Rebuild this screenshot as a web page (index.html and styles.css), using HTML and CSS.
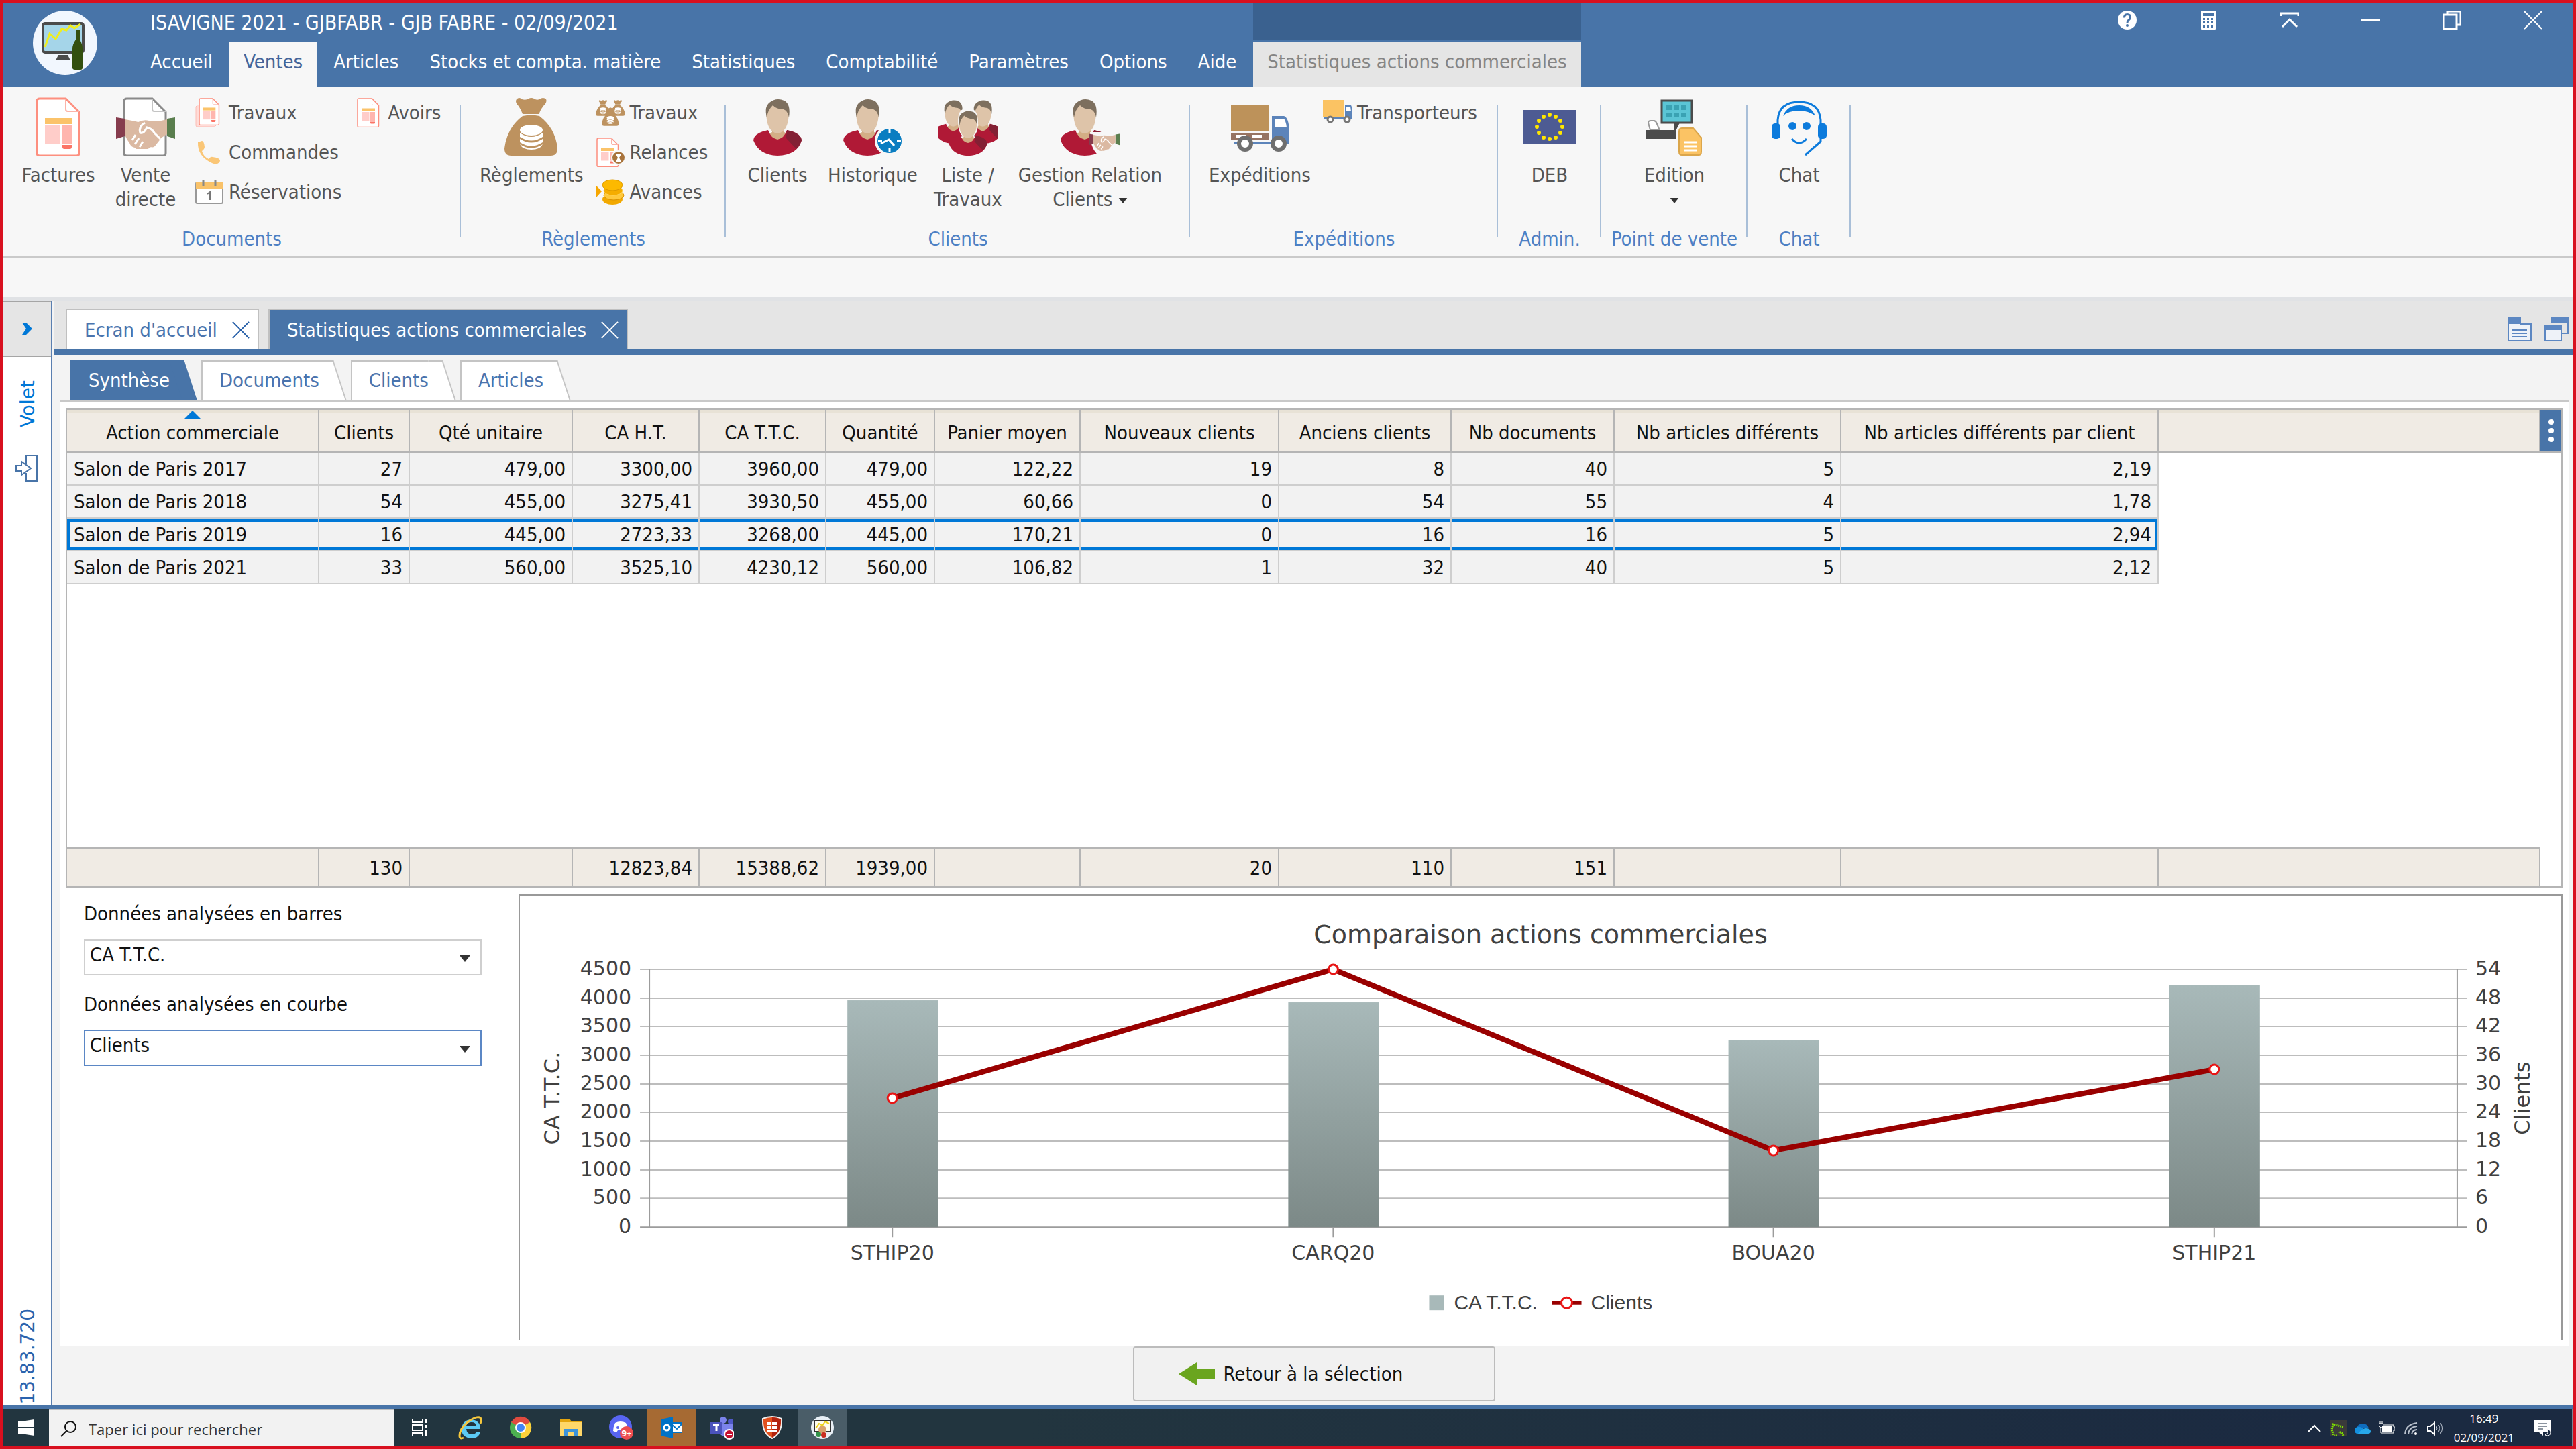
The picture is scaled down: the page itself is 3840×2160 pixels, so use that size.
FILE: index.html
```
<!DOCTYPE html>
<html lang="fr">
<head>
    <meta charset="UTF-8">
    <meta name="viewport" content="width=device-width, initial-scale=1.0">
    <title>ISAVIGNE 2021 - Statistiques actions commerciales</title>
    <link rel="stylesheet" href="styles.css">
</head>
<body>
    <!-- Shared icon shapes -->
    <svg class="defs" aria-hidden="true">
        <symbol id="i-doc" viewBox="0 0 88 88">
            <path d="M16 2h39l20 20v61q0 4-4 4H16q-4 0-4-4V6q0-4 4-4z" fill="#fff" stroke="#fd8f7f" stroke-width="3"/>
            <path d="M55 2v16q0 3 3 3h17" fill="none" stroke="#fbb3a8" stroke-width="2"/>
            <path d="M24 31h40v9H24z" fill="#fbc36a"/>
            <path d="M24 42h23v27H24z" fill="#ffcdc9"/>
            <path d="M50 42h14v27H50z" fill="#ffb5ae"/>
            <path d="M50 71h14v3q0 3-3 3h-8q-3 0-3-3z" fill="#fb7466"/>
        </symbol>
        <symbol id="i-hands" viewBox="0 0 88 44">
            <path d="M0 0l13 2v26L0 32z" fill="#863c4d"/>
            <path d="M88 0L76 2v26l12 4z" fill="#5a7e4e"/>
            <path d="M13 3q12 2 20 4 8-4 16-2 14 2 27-2v22l-8 5-8 10q-4 6-8 4-8 6-14 4-6 2-10-3-6-1-8-7-4-5-7-12z" fill="#dbb9a2"/>
            <path d="M43 8q-10 6-7 15 5 2 10-8 8 2 11 8l9 9M35 44l5-8M28 40l6-9M24 34l5-8" fill="none" stroke="#fff" stroke-width="3"/>
        </symbol>
        <symbol id="i-person" viewBox="0 0 88 88">
            <path d="M36 42h18v10l6 3-16 14-14-14 6-3z" fill="#d3ae86"/>
            <path d="M8 64q1-9 14-13l8-2q4 12 14 14 10-2 14-14l8 2q13 4 14 13-6 22-36 23Q16 86 8 64z" fill="#b01936"/>
            <path d="M58 49l8 2q13 4 14 13-2 7-8 13L56 60q2-5 2-11z" fill="#832034"/>
            <path d="M27 20q0-14 17-14t17 14q0 32-17 34-17-2-17-34z" fill="#dec4a9"/>
            <path d="M28 30q-4-16 4-22Q42 0 54 5q10 5 7 25-2-10-8-12-10 0-16-6-7 6-9 18z" fill="#7d6f5e"/>
        </symbol>
        <symbol id="i-bag" viewBox="0 0 88 88">
            <path d="M22 3q4-4 8 0 6 2 10-1 4-2 8 0 4 3 8 1 6-4 10 0 2 4-4 10-6 8-6 12l-25 0q-2-6-6-12-6-6-3-10z" fill="#bd925f"/>
            <path d="M31 28q13-3 25 0 24 18 27 48 0 11-10 11H14Q4 87 4 76 8 45 31 28z" fill="#bd925f"/>
            <ellipse cx="44" cy="49" rx="17" ry="8" fill="#fff"/>
            <path d="M27 53q17 12 34 0v6q-17 11-34 0zM27 62q17 11 34 0v5q-17 11-34 0zM27 70q17 11 34 0-4 8-17 8t-17-8z" fill="#fff"/>
        </symbol>
        <symbol id="i-coins" viewBox="0 0 44 44">
            <path d="M0 12l9 9-9 10z" fill="#f7a700"/>
            <ellipse cx="25" cy="33" rx="15" ry="8" fill="#f2a900"/>
            <ellipse cx="27" cy="27" rx="15" ry="7" fill="#ffc93c" stroke="#d99100"/>
            <ellipse cx="26" cy="20" rx="14" ry="7" fill="#f5ad00" stroke="#ffd562"/>
            <ellipse cx="25" cy="12" rx="15" ry="8" fill="#fdb900" stroke="#dd9a00"/>
        </symbol>
        <symbol id="i-close" viewBox="0 0 28 28">
            <path d="M1 1l26 26M27 1L1 27" fill="none" stroke="currentColor" stroke-width="2"/>
        </symbol>
        <symbol id="i-caret" viewBox="0 0 18 10">
            <path d="M1 0h16L9 10z" fill="#333"/>
        </symbol>
    </svg>

    <div class="app">
        <header class="header">
            <div class="logo">
                <svg viewBox="0 0 96 96" aria-hidden="true">
                    <circle cx="48" cy="48" r="48" fill="#f2f7fe"/>
                    <rect x="15" y="19" width="60" height="43" rx="3" fill="#a5d5e9" stroke="#4b4b4b" stroke-width="4"/>
                    <path d="M18 54l7-20 9 8 9-15 7 2 6-7 6 4 9-6" fill="none" stroke="#f0ee1c" stroke-width="3"/>
                    <path d="M38 66h14l4 8H34z" fill="#4b4b4b"/>
                    <path d="M64 29h6v14q4 7 4 14v28q0 3-3 3h-8q-4 0-4-3V57q0-7 5-14z" fill="#33500f"/>
                </svg>
            </div>
            <div class="header-main">
                <div class="title-row">
                    <h1 class="app-title">ISAVIGNE 2021 - GJBFABR - GJB FABRE - 02/09/2021</h1>
                    <div class="window-buttons">
                        <button type="button" aria-label="Aide">
                            <svg viewBox="0 0 28 28"><circle cx="14" cy="14" r="14" fill="#fff"/><path d="M9.500 10.500q0-5 4.500-5t4.500 4.500q0 2-2.500 4-2 1.500-2 4" fill="none" stroke="#4874a8" stroke-width="3"/><circle cx="14" cy="22" r="2" fill="#4874a8"/></svg>
                        </button>
                        <button type="button" aria-label="Calculatrice">
                            <svg viewBox="0 0 28 28"><rect x="3" y="0" width="22" height="28" rx="1" fill="#fff"/><path d="M6 3h16v5H6zM6 11h3v3H6zM12 11h3v3h-3zM18 11h3v3h-3zM6 16h3v3H6zM12 16h3v3h-3zM18 16h3v3h-3zM6 22h3v3H6zM12 22h3v3h-3zM18 22h3v3h-3z" fill="#4874a8"/></svg>
                        </button>
                        <button type="button" aria-label="Réduire le ruban">
                            <svg viewBox="0 0 28 28"><path d="M1 8V4h26v4M3 24l11-11 11 11" fill="none" stroke="#fff" stroke-width="3"/></svg>
                        </button>
                        <button type="button" aria-label="Réduire">
                            <svg viewBox="0 0 28 28"><path d="M0 14h28" stroke="#fff" stroke-width="3"/></svg>
                        </button>
                        <button type="button" aria-label="Restaurer">
                            <svg viewBox="0 0 28 28"><path d="M1 6h20v21H1zM7 6V1h20v20h-6" fill="none" stroke="#fff" stroke-width="3"/></svg>
                        </button>
                        <button type="button" aria-label="Fermer">
                            <svg class="light"><use href="#i-close"/></svg>
                        </button>
                    </div>
                </div>
                <nav class="menu">
                    <a href="#">Accueil</a>
                    <a href="#" class="active">Ventes</a>
                    <a href="#">Articles</a>
                    <a href="#">Stocks et compta. matière</a>
                    <a href="#">Statistiques</a>
                    <a href="#">Comptabilité</a>
                    <a href="#">Paramètres</a>
                    <a href="#">Options</a>
                    <a href="#">Aide</a>
                    <a href="#" class="context">Statistiques actions commerciales</a>
                </nav>
            </div>
        </header>

        <div class="ribbon">
            <section class="group group-documents">
                <div class="group-items">
                    <button type="button" class="big"><svg><use href="#i-doc"/></svg><span>Factures</span></button>
                    <button type="button" class="big">
                        <svg viewBox="0 0 88 88">
                            <path d="M16 2h38l20 20v61q0 4-4 4H16q-4 0-4-4V6q0-4 4-4z" fill="#fff" stroke="#8a8a8a" stroke-width="3"/>
                            <path d="M54 2v16q0 3 3 3h17" fill="none" stroke="#c4c4c4" stroke-width="2"/>
                            <use href="#i-hands" x="0" y="27" width="88" height="50"/>
                        </svg>
                        <span>Vente<br>directe</span>
                    </button>
                    <div class="stack">
                        <button type="button" class="small">
                            <svg viewBox="0 0 44 44"><path d="M5 10l-3 3v28q0 2 2 2h26l4-4" fill="#ffdcd8" stroke="#fcbdb4"/><use href="#i-doc" x="0" y="0" width="44" height="41"/></svg>Travaux
                        </button>
                        <button type="button" class="small">
                            <svg viewBox="0 0 44 44"><path d="M5 7l6-2q3 0 4 9 0 3-4 6 2 8 10 12 3-4 6-3 10 1 11 5 0 3-4 5-4 1-8-1Q4 28 5 7z" fill="#fac676"/></svg>Commandes
                        </button>
                        <button type="button" class="small">
                            <svg viewBox="0 0 44 44"><rect x="2" y="8" width="40" height="31" rx="2" fill="#fff" stroke="#999" stroke-width="2"/><path d="M2 7h40v11H2z" fill="#f9c269"/><path d="M13 4v9M31 4v9" stroke="#888" stroke-width="3"/><path d="M19 25l4-3v12" fill="none" stroke="#777" stroke-width="2"/></svg>Réservations
                        </button>
                    </div>
                    <div class="stack stack-avoirs">
                        <button type="button" class="small"><svg><use href="#i-doc"/></svg>Avoirs</button>
                    </div>
                </div>
                <h2>Documents</h2>
            </section>

            <section class="group group-reglements">
                <div class="group-items">
                    <button type="button" class="big"><svg><use href="#i-bag"/></svg><span>Règlements</span></button>
                    <div class="stack">
                        <button type="button" class="small">
                            <svg viewBox="0 0 44 44"><use href="#i-bag" x="-1" y="0" width="24" height="30"/><use href="#i-bag" x="21" y="0" width="24" height="30"/><use href="#i-bag" x="8" y="12" width="28" height="32"/></svg>Travaux
                        </button>
                        <button type="button" class="small">
                            <svg viewBox="0 0 44 44"><use href="#i-doc" x="-4" y="0" width="44" height="44"/><circle cx="34" cy="30" r="10" fill="#a9743c" stroke="#f7f7f7" stroke-width="2"/><path d="M30 25h8l-3 5 3 6h-8l3-6z" fill="#fff"/></svg>Relances
                        </button>
                        <button type="button" class="small"><svg><use href="#i-coins"/></svg>Avances</button>
                    </div>
                </div>
                <h2>Règlements</h2>
            </section>

            <section class="group group-clients">
                <div class="group-items">
                    <button type="button" class="big"><svg><use href="#i-person"/></svg><span>Clients</span></button>
                    <button type="button" class="big">
                        <svg viewBox="0 0 88 88"><use href="#i-person" x="-8" y="0" width="88" height="88"/><circle cx="69" cy="65" r="20" fill="#0a7dc1" stroke="#f7f7f7" stroke-width="4"/><path d="M69 48v6M69 76v6M52 65h6M80 65h6M56 69l12-6 8 9" fill="none" stroke="#fff" stroke-width="3"/></svg>
                        <span>Historique</span>
                    </button>
                    <button type="button" class="big">
                        <svg viewBox="0 0 88 88"><use href="#i-person" x="-12" y="2" width="68" height="68"/><use href="#i-person" x="32" y="2" width="68" height="68"/><path d="M44 16q-16 0-15 22 1 16 7 20-18 4-22 12 6 18 30 18t30-18q-4-10-22-12 7-4 7-20 0-22-15-22z" fill="#f7f7f7"/><use href="#i-person" x="9" y="18" width="70" height="70"/></svg>
                        <span>Liste /<br>Travaux</span>
                    </button>
                    <button type="button" class="big">
                        <svg viewBox="0 0 88 88"><use href="#i-person" x="-8" y="0" width="88" height="88"/><path d="M44 52h46v32H54q-10-10-10-32z" fill="#f7f7f7"/><use href="#i-hands" x="42" y="51" width="46" height="30"/></svg>
                        <span>Gestion Relation<br>Clients <svg class="caret"><use href="#i-caret"/></svg></span>
                    </button>
                </div>
                <h2>Clients</h2>
            </section>

            <section class="group group-expeditions">
                <div class="group-items">
                    <button type="button" class="big">
                        <svg viewBox="0 0 88 88"><path d="M1 12h56v38H1z" fill="#bd925a"/><path d="M1 53h57v11H1z" fill="#977462"/><path d="M9 58h14M33 58h14" stroke="#fff" stroke-width="4"/><path d="M62 28h18q7 2 8 22v20H5V66h57z" fill="#5c84ba"/><path d="M66 32h14q3 4 4 13H66z" fill="#fff"/><circle cx="22" cy="69" r="9" fill="#fff" stroke="#6f6f6f" stroke-width="6"/><circle cx="72" cy="69" r="9" fill="#fff" stroke="#6f6f6f" stroke-width="6"/></svg>
                        <span>Expéditions</span>
                    </button>
                    <div class="stack">
                        <button type="button" class="small">
                            <svg viewBox="0 0 44 44"><path d="M0 3h31v25H0z" fill="#fbc363"/><path d="M33 10h8q3 2 3 12v10H2v-3h31z" fill="#5c84ba"/><path d="M35 13h6l1 7h-7z" fill="#fff"/><circle cx="11" cy="32" r="4" fill="#fff" stroke="#777" stroke-width="3"/><circle cx="36" cy="32" r="4" fill="#fff" stroke="#777" stroke-width="3"/></svg>Transporteurs
                        </button>
                    </div>
                </div>
                <h2>Expéditions</h2>
            </section>

            <section class="group group-admin">
                <div class="group-items">
                    <button type="button" class="big">
                        <svg viewBox="0 0 88 88"><path d="M5 19h78v50H5z" fill="#4d5b93"/><g fill="#ffe600"><circle cx="44" cy="26" r="3"/><circle cx="53" cy="29" r="3"/><circle cx="60" cy="35" r="3"/><circle cx="63" cy="44" r="3"/><circle cx="60" cy="53" r="3"/><circle cx="53" cy="60" r="3"/><circle cx="44" cy="62" r="3"/><circle cx="35" cy="60" r="3"/><circle cx="28" cy="53" r="3"/><circle cx="25" cy="44" r="3"/><circle cx="28" cy="35" r="3"/><circle cx="35" cy="29" r="3"/></g></svg>
                        <span>DEB</span>
                    </button>
                </div>
                <h2>Admin.</h2>
            </section>

            <section class="group group-pdv">
                <div class="group-items">
                    <button type="button" class="big">
                        <svg viewBox="0 0 88 88"><rect x="25" y="5" width="45" height="33" fill="#5bc5d5" stroke="#4b4b4b" stroke-width="3"/><path d="M32 12h8v7h-8zM43 12h8v7h-8zM54 12h8v7h-8zM32 23h8v7h-8zM43 23h8v7h-8zM54 23h8v7h-8z" fill="#3aa2b3"/><path d="M8 49L5 38q0-3 4-3h5q3 1 4 5l4 9z" fill="#fff" stroke="#999" stroke-width="2"/><path d="M44 38h8l-6 12v12H1V49h43z" fill="#4b4b4b"/><path d="M55 46h17l12 14v21q0 5-4 5H55q-4 0-4-5V51q0-5 4-5z" fill="#fbc364" stroke="#dba64b" stroke-width="2"/><path d="M58 67h20M58 73h20M58 79h20" stroke="#fff" stroke-width="3"/></svg>
                        <span>Edition<br><svg class="caret"><use href="#i-caret"/></svg></span>
                    </button>
                </div>
                <h2>Point de vente</h2>
            </section>

            <section class="group group-chat">
                <div class="group-items">
                    <button type="button" class="big">
                        <svg viewBox="0 0 88 88"><path d="M12 40V34Q14 7 44 7t32 27v32L53 86" fill="none" stroke="#0d7bdc" stroke-width="3"/><path d="M20 28q6-16 24-16t24 16q-10-8-24-8-16 0-24 8z" fill="#0d7bdc"/><rect x="3" y="39" width="13" height="23" rx="5" fill="#0d7bdc"/><rect x="72" y="39" width="13" height="23" rx="5" fill="#0d7bdc"/><circle cx="34" cy="43" r="6" fill="#0d7bdc"/><circle cx="55" cy="43" r="6" fill="#0d7bdc"/><path d="M33 62q11 12 22 0" fill="none" stroke="#0d7bdc" stroke-width="3"/></svg>
                        <span>Chat</span>
                    </button>
                </div>
                <h2>Chat</h2>
            </section>
        </div>
        <div class="ribbon-gap"></div>

        <div class="workspace">
            <aside class="sidebar">
                <button type="button" class="sidebar-toggle" aria-label="Ouvrir le volet">
                    <svg viewBox="0 0 18 22"><path d="M2 2h6l9 9-9 9H2l6-9z" fill="#0078d7"/></svg>
                </button>
                <span class="sidebar-label">Volet</span>
                <svg class="sidebar-pin" viewBox="0 0 36 42"><path d="M17 14V2h16v38H17V28M2 17h8v-6l14 10-14 10v-6H2z" fill="none" stroke="#4874a8" stroke-width="2"/></svg>
                <span class="sidebar-version">13.83.720</span>
            </aside>

            <main class="content">
                <div class="doc-tabs">
                    <div class="doc-tab">
                        <a href="#">Ecran d'accueil</a>
                        <button type="button" aria-label="Fermer l'onglet"><svg><use href="#i-close"/></svg></button>
                    </div>
                    <div class="doc-tab active">
                        <a href="#">Statistiques actions commerciales</a>
                        <button type="button" aria-label="Fermer l'onglet"><svg><use href="#i-close"/></svg></button>
                    </div>
                    <div class="doc-tools">
                        <button type="button" aria-label="Liste des fenêtres">
                            <svg viewBox="0 0 36 36"><path d="M1 1h18v9h16v25H1z" fill="#eef2f8" stroke="#5c87c2" stroke-width="2"/><path d="M1 1h18v9H1z" fill="#5c87c2"/><path d="M7 19h22M7 24h22M7 29h22" stroke="#5c87c2" stroke-width="2"/></svg>
                        </button>
                        <button type="button" aria-label="Cascade">
                            <svg viewBox="0 0 36 36"><path d="M11 1h24v23H24" fill="none" stroke="#5c87c2" stroke-width="2"/><path d="M10 0h26v8H10z" fill="#5c87c2"/><path d="M1 12h24v23H1z" fill="#eef2f8" stroke="#5c87c2" stroke-width="2"/><path d="M0 11h26v8H0z" fill="#5c87c2"/></svg>
                        </button>
                    </div>
                </div>

                <div class="subtabs">
                    <button type="button" class="subtab active">Synthèse</button>
                    <button type="button" class="subtab">Documents</button>
                    <button type="button" class="subtab">Clients</button>
                    <button type="button" class="subtab">Articles</button>
                </div>

                <div class="panel">
                    <div class="grid-box">
                        <table class="grid">
                            <colgroup>
                                <col class="c-action"><col class="c-clients"><col class="c-qte"><col class="c-ca"><col class="c-ca"><col class="c-quantite"><col class="c-panier"><col class="c-nouveaux"><col class="c-anciens"><col class="c-docs"><col class="c-articles"><col class="c-parclient"><col><col class="c-menu">
                            </colgroup>
                            <thead>
                                <tr>
                                    <th class="sorted">Action commerciale<svg class="sort" viewBox="0 0 26 13"><path d="M0 13L13 0l13 13z" fill="#0078d7"/></svg></th>
                                    <th>Clients</th>
                                    <th>Qté unitaire</th>
                                    <th>CA H.T.</th>
                                    <th>CA T.T.C.</th>
                                    <th>Quantité</th>
                                    <th>Panier moyen</th>
                                    <th>Nouveaux clients</th>
                                    <th>Anciens clients</th>
                                    <th>Nb documents</th>
                                    <th>Nb articles différents</th>
                                    <th>Nb articles différents par client</th>
                                    <th></th>
                                    <th class="menu-cell"><button type="button" aria-label="Colonnes"><svg viewBox="0 0 8 36"><circle cx="4" cy="5" r="4" fill="#fff"/><circle cx="4" cy="18" r="4" fill="#fff"/><circle cx="4" cy="31" r="4" fill="#fff"/></svg></button></th>
                                </tr>
                            </thead>
                            <tbody>
                                <tr><td>Salon de Paris 2017</td><td>27</td><td>479,00</td><td>3300,00</td><td>3960,00</td><td>479,00</td><td>122,22</td><td>19</td><td>8</td><td>40</td><td>5</td><td>2,19</td></tr>
                                <tr><td>Salon de Paris 2018</td><td>54</td><td>455,00</td><td>3275,41</td><td>3930,50</td><td>455,00</td><td>60,66</td><td>0</td><td>54</td><td>55</td><td>4</td><td>1,78</td></tr>
                                <tr class="selected"><td>Salon de Paris 2019</td><td>16</td><td>445,00</td><td>2723,33</td><td>3268,00</td><td>445,00</td><td>170,21</td><td>0</td><td>16</td><td>16</td><td>5</td><td>2,94</td></tr>
                                <tr><td>Salon de Paris 2021</td><td>33</td><td>560,00</td><td>3525,10</td><td>4230,12</td><td>560,00</td><td>106,82</td><td>1</td><td>32</td><td>40</td><td>5</td><td>2,12</td></tr>
                                <tr class="filler"><td colspan="14"></td></tr>
                            </tbody>
                            <tfoot>
                                <tr><td></td><td>130</td><td></td><td>12823,84</td><td>15388,62</td><td>1939,00</td><td></td><td>20</td><td>110</td><td>151</td><td></td><td></td><td></td><td class="corner"></td></tr>
                            </tfoot>
                        </table>
                    </div>

                    <div class="analysis">
                        <form class="analysis-form">
                            <label for="bars">Données analysées en barres</label>
                            <div class="select">
                                <select id="bars"><option>CA T.T.C.</option></select>
                                <svg class="caret"><use href="#i-caret"/></svg>
                            </div>
                            <label for="curve">Données analysées en courbe</label>
                            <div class="select focus">
                                <select id="curve"><option>Clients</option></select>
                                <svg class="caret"><use href="#i-caret"/></svg>
                            </div>
                        </form>

                        <div class="chart">
                            <svg viewBox="0 0 3042 662" role="img" aria-label="Comparaison actions commerciales">
                                <defs>
                                    <linearGradient id="bar" x1="0" y1="0" x2="0" y2="1">
                                        <stop offset="0" stop-color="#a8b9b9"/>
                                        <stop offset="1" stop-color="#7c8987"/>
                                    </linearGradient>
                                </defs>
                                <text class="chart-title" x="1521" y="70">Comparaison actions commerciales</text>
                                <path class="lines" d="M179 109H2902M179 152H2902M179 194H2902M179 237H2902M179 280H2902M179 322H2902M179 365H2902M179 408H2902M179 450H2902"/>
                                <path class="axes" d="M179 493H2902M193 109V493M2887 109V493M555 493v15M1212 493v15M1868 493v15M2525 493v15"/>
                                <g fill="url(#bar)">
                                    <rect x="488" y="155" width="135" height="338"/>
                                    <rect x="1145" y="158" width="135" height="335"/>
                                    <rect x="1801" y="214" width="135" height="279"/>
                                    <rect x="2458" y="132" width="135" height="361"/>
                                </g>
                                <path class="curve" d="M555 301L1212 109L1868 379L2525 258"/>
                                <g class="points">
                                    <circle cx="555" cy="301" r="7"/>
                                    <circle cx="1212" cy="109" r="7"/>
                                    <circle cx="1868" cy="379" r="7"/>
                                    <circle cx="2525" cy="258" r="7"/>
                                </g>
                                <g class="ticks-left">
                                    <text x="166" y="118">4500</text>
                                    <text x="166" y="161">4000</text>
                                    <text x="166" y="203">3500</text>
                                    <text x="166" y="246">3000</text>
                                    <text x="166" y="289">2500</text>
                                    <text x="166" y="331">2000</text>
                                    <text x="166" y="374">1500</text>
                                    <text x="166" y="417">1000</text>
                                    <text x="166" y="459">500</text>
                                    <text x="166" y="502">0</text>
                                </g>
                                <g class="ticks-right">
                                    <text x="2914" y="118">54</text>
                                    <text x="2914" y="161">48</text>
                                    <text x="2914" y="203">42</text>
                                    <text x="2914" y="246">36</text>
                                    <text x="2914" y="289">30</text>
                                    <text x="2914" y="331">24</text>
                                    <text x="2914" y="374">18</text>
                                    <text x="2914" y="417">12</text>
                                    <text x="2914" y="459">6</text>
                                    <text x="2914" y="502">0</text>
                                </g>
                                <g class="ticks-bottom">
                                    <text x="555" y="542">STHIP20</text>
                                    <text x="1212" y="542">CARQ20</text>
                                    <text x="1868" y="542">BOUA20</text>
                                    <text x="2525" y="542">STHIP21</text>
                                </g>
                                <text class="axis-title" transform="translate(59 301) rotate(-90)">CA T.T.C.</text>
                                <text class="axis-title" transform="translate(2995 301) rotate(-90)">Clients</text>
                                <g class="legend">
                                    <path d="M1355 595h22v22h-22z" fill="#a8b9b9"/>
                                    <text x="1392" y="616">CA T.T.C.</text>
                                    <path class="legend-line" d="M1538 606h44"/>
                                    <circle cx="1560" cy="606" r="8"/>
                                    <text x="1596" y="616">Clients</text>
                                </g>
                            </svg>
                        </div>
                    </div>
                </div>

                <div class="actions">
                    <button type="button" class="back-btn">
                        <svg viewBox="0 0 54 34"><path d="M0 17L27 0v9h27v16H27v9z" fill="#6aa51f"/></svg>
                        Retour à la sélection
                    </button>
                </div>
            </main>
        </div>
    </div>

    <footer class="taskbar">
        <button type="button" class="start" aria-label="Démarrer">
            <svg viewBox="0 0 24 24"><path d="M0 3l10-1v9H0zM11 2l13-2v11H11zM0 13h10v9L0 21zM11 13h13v11l-13-2z" fill="#fff"/></svg>
        </button>
        <label class="search">
            <svg viewBox="0 0 24 24"><circle cx="15" cy="9" r="8" fill="none" stroke="#111" stroke-width="2"/><path d="M9 15l-8 8" stroke="#111" stroke-width="2"/></svg>
            <input type="text" placeholder="Taper ici pour rechercher" aria-label="Rechercher">
        </label>
        <div class="task-icons">
            <button type="button" aria-label="Vue des tâches">
                <svg class="thin" viewBox="0 0 24 24"><path d="M1 0v4h15V0M1 24v-4h15v4M1 8h15v8H1zM21 0v5M21 8v4M21 15v9" fill="none" stroke="#fff" stroke-width="2"/></svg>
            </button>
            <button type="button" aria-label="Internet Explorer">
                <svg viewBox="0 0 36 36"><path d="M33 20H12q1 8 8 8 5 0 7-3h6q-3 9-13 9Q5 33 5 20 6 7 19 6q14 1 14 14zM27 15q-1-5-7-5t-8 5z" fill="#5ccbf6"/><path d="M8 33q-6 3-6-3Q2 20 14 10 26 1 32 3q4 2 1 9" fill="none" stroke="#f5c73d" stroke-width="3"/></svg>
            </button>
            <button type="button" aria-label="Chrome">
                <svg viewBox="0 0 36 36"><circle cx="18" cy="18" r="16" fill="#4caf50"/><path d="M18 18L4 10A16 16 0 0 1 32 10z" fill="#e04a3f"/><path d="M18 18l14-8a16 16 0 0 1-14 24z" fill="#fdd13a"/><circle cx="18" cy="18" r="8" fill="#fff"/><circle cx="18" cy="18" r="6" fill="#4285f4"/></svg>
            </button>
            <button type="button" aria-label="Explorateur">
                <svg viewBox="0 0 36 36"><path d="M2 5h14l3 4h15v21H2z" fill="#e4a50e"/><path d="M2 10h32v21H2z" fill="#ffd769"/><path d="M8 31V20h20v11h-6v-6h-8v6z" fill="#3d93d9"/></svg>
            </button>
            <button type="button" aria-label="Discord">
                <svg viewBox="0 0 36 36"><circle cx="17" cy="17" r="17" fill="#5865f2"/><path d="M9 11q8-4 16 0 3 6 3 12l-5 2-2-3h-8l-2 3-5-2q0-6 3-12z" fill="#fff"/><circle cx="13" cy="18" r="2" fill="#5865f2"/><circle cx="26" cy="26" r="10" fill="#ed4e50"/><text x="26" y="31" class="badge">9+</text></svg>
            </button>
            <button type="button" class="outlook" aria-label="Outlook">
                <svg viewBox="0 0 36 36"><path d="M18 10h16v16H18z" fill="#0072c6"/><path d="M19 12h14v12H19z" fill="#fff"/><path d="M19 14l7 6 7-7" fill="none" stroke="#0072c6" stroke-width="2"/><path d="M2 6l18-4v32L2 30z" fill="#0072c6"/><circle cx="11" cy="18" r="4" fill="none" stroke="#fff" stroke-width="3"/></svg>
            </button>
            <button type="button" aria-label="Teams">
                <svg viewBox="0 0 36 36"><circle cx="20" cy="7" r="5" fill="#7b83eb"/><circle cx="31" cy="9" r="4" fill="#5059c9"/><path d="M14 13h20v10q-2 9-9 9-10-1-11-9z" fill="#7b83eb"/><path d="M1 10h17v17H1z" fill="#4b53bc"/><path d="M5 14h9M10 14v9" stroke="#fff" stroke-width="3"/><circle cx="29" cy="28" r="7" fill="#c50f2e" stroke="#fff" stroke-width="2"/><path d="M25 28h8" stroke="#fff" stroke-width="2"/></svg>
            </button>
            <button type="button" aria-label="Sécurité">
                <svg viewBox="0 0 36 36"><path d="M4 5q14-6 28 0 1 22-14 29Q3 27 4 5z" fill="#e2501c" stroke="#eee" stroke-width="2"/><path d="M18 3q8 0 13 3 0 20-13 27z" fill="#b2230f"/><path d="M11 10h5v4h-5zM18 10h7v4h-7zM11 16h5v4h-5zM18 16h7v4h-7zM11 22h14v3H11z" fill="#fff"/></svg>
            </button>
            <button type="button" class="current" aria-label="ISAVIGNE">
                <svg viewBox="0 0 36 36"><circle cx="18" cy="18" r="17" fill="#e9f0f6"/><path d="M6 8h24v16H6z" fill="#fdfdf0" stroke="#333" stroke-width="2"/><path d="M8 19l5-7 5 3 4-6 6 3" fill="none" stroke="#ecd21c" stroke-width="2"/><circle cx="18" cy="21" r="6" fill="#d8a36e"/><circle cx="12" cy="28" r="4" fill="#32934a"/><circle cx="20" cy="29" r="4" fill="#c92e21"/></svg>
            </button>
        </div>
        <div class="tray">
            <svg viewBox="0 0 24 24"><path d="M3 17l9-9 9 9" fill="none" stroke="#fff" stroke-width="2"/></svg>
            <svg viewBox="0 0 24 24"><path d="M0 0h24v24H0z" fill="#3a3a3a"/><path d="M19 10L4 6l-2 8 3 9 4 0M19 23l-2-4-5-2" fill="none" stroke="#7fe000" stroke-width="3" stroke-dasharray="2 1"/></svg>
            <svg viewBox="0 0 24 24"><path d="M3 13q1-8 9-8 7 0 9 7z" fill="#0f6cbd"/><path d="M5 20q-5 0-5-5t6-5q5 0 8 4l-6 6z" fill="#1490df"/><path d="M5 20q5-7 11-8 7 0 8 4 0 4-4 4z" fill="#28a8ea"/></svg>
            <svg viewBox="0 0 24 24"><path d="M5 9h15v8H5z" fill="#fff"/><path d="M8 7h14v3h2v5h-2v4H3v-7M0 5h7v3q-1 3-3 3T0 8zM2 2v3M5 2v3" fill="none" stroke="#fff" stroke-width="1"/></svg>
            <svg viewBox="0 0 24 24"><path d="M3 21Q4 6 21 4M8 21q1-11 13-12M13 21q1-7 8-7" fill="none" stroke="#b8c0cc" stroke-width="2"/><circle cx="19" cy="20" r="2" fill="#fff"/></svg>
            <svg viewBox="0 0 24 24"><path d="M1 9h4l6-5v17l-6-5H1z" fill="none" stroke="#fff" stroke-width="2"/><path d="M14 9q2 3 0 6M17 7q4 5 0 10M20 4q5 8 0 16" fill="none" stroke="#b8c0cc" stroke-width="1"/></svg>
            <div class="clock"><span>16:49</span><span>02/09/2021</span></div>
            <svg class="notif" viewBox="0 0 24 24"><path d="M0 0h24v18H13v5l-6-5H0z" fill="#fff"/><path d="M5 5h14M5 9h14M5 13h8" stroke="#1b2a41" stroke-width="1"/><path d="M18 13q6 5-2 9 8 3 8-4 0-4-6-5z" fill="#1b2a41" stroke="#fff" stroke-width="1"/></svg>
        </div>
    </footer>
</body>
</html>
```
FILE: styles.css
```
* {
    margin: 0;
    padding: 0;
    box-sizing: border-box;
}

body {
    min-height: 100vh;
    display: flex;
    flex-direction: column;
    border: 4px solid #d8101f;
    background: #f3f3f3;
    font-family: "DejaVu Sans Condensed", "Noto Sans", sans-serif;
    font-size: 29px;
    line-height: 36px;
    color: #111;
}

button,
select,
input {
    font: inherit;
    color: inherit;
    background: none;
    border: none;
}

button {
    cursor: pointer;
}

a {
    color: inherit;
    text-decoration: none;
}

svg {
    display: block;
    flex: none;
}

.defs {
    position: absolute;
    width: 0;
    height: 0;
}

.caret {
    width: 18px;
    height: 10px;
}

.app {
    flex: 1;
    display: flex;
    flex-direction: column;
}

/* Header */
.header {
    display: flex;
    background: #4874a8;
    color: #fff;
}

.logo {
    width: 199px;
    padding: 12px 0 0 45px;
}

.logo svg {
    width: 96px;
    height: 96px;
}

.header-main {
    flex: 1;
}

.title-row {
    display: flex;
    justify-content: space-between;
    height: 58px;
}

.app-title {
    padding: 12px 0 0 21px;
    font-size: 30px;
    font-weight: normal;
}

.window-buttons {
    display: flex;
}

.window-buttons button {
    width: 121px;
    height: 52px;
    display: flex;
    justify-content: center;
    align-items: center;
}

.window-buttons svg {
    width: 28px;
    height: 28px;
}

.menu {
    display: flex;
    gap: 4px;
}

.menu a {
    height: 67px;
    padding: 12px 21px 0;
    white-space: nowrap;
}

.menu .active {
    background: #f7f7f7;
    color: #44659a;
}

.menu .context {
    position: relative;
    background: #e5e5e5;
    color: #858585;
}

.menu .context::before {
    content: "";
    position: absolute;
    left: 0;
    right: 0;
    bottom: 100%;
    height: 58px;
    background: #3a618f;
    border-bottom: 2px solid #4874a8;
}

/* Ribbon */
.ribbon {
    display: flex;
    height: 256px;
    padding-bottom: 8px;
    background: #f7f7f7;
    border-bottom: 3px solid #cacaca;
    color: #555;
}

.group {
    position: relative;
    display: flex;
    flex-direction: column;
    justify-content: space-between;
}

.group::after {
    content: "";
    position: absolute;
    top: 28px;
    right: 0;
    bottom: 20px;
    width: 2px;
    background: #a9bfd8;
}

.group-items {
    display: flex;
    justify-content: center;
}

.group h2 {
    text-align: center;
    font-size: inherit;
    font-weight: normal;
    color: #4d80c4;
}

.group-documents { width: 683px; }
.group-reglements { width: 395px; }
.group-clients { width: 692px; }
.group-expeditions { width: 459px; }
.group-admin { width: 154px; }
.group-pdv { width: 218px; }
.group-chat { width: 154px; }

.group-documents .group-items,
.group-reglements .group-items,
.group-expeditions .group-items {
    justify-content: flex-start;
    padding-left: 18px;
}

.group-clients .group-items {
    justify-content: flex-start;
    padding-left: 12px;
}

.big {
    min-width: 130px;
    padding: 16px 10px 0;
    display: flex;
    flex-direction: column;
    align-items: center;
    gap: 10px;
}

.big > svg {
    width: 88px;
    height: 88px;
}

.big .caret {
    display: inline-block;
    width: 14px;
    vertical-align: middle;
}

.stack {
    padding: 9px 0 0 8px;
}

.stack-avoirs {
    margin-left: 10px;
}

.small {
    display: flex;
    align-items: center;
    gap: 7px;
    height: 59px;
}

.small svg {
    width: 44px;
    height: 44px;
}

.ribbon-gap {
    height: 63px;
    background: #f7f7f7;
    border-bottom: 5px solid #e0e2e5;
}

/* Workspace */
.workspace {
    flex: 1;
    display: flex;
    border-bottom: 6px solid #4874a8;
}

.sidebar {
    width: 74px;
    display: flex;
    flex-direction: column;
    align-items: center;
    background: #fff;
    border-right: 2px solid #5a7fb0;
    font-family: "DejaVu Sans", sans-serif;
    font-size: 28px;
    line-height: 30px;
    color: #0078d7;
}

.sidebar-toggle {
    width: 100%;
    height: 84px;
    display: flex;
    justify-content: center;
    align-items: center;
    background: #e5e5e5;
    border: solid #a5a5a5;
    border-width: 2px 0;
}

.sidebar-toggle svg {
    width: 18px;
    height: 22px;
}

.sidebar-label,
.sidebar-version {
    margin-left: 4px;
    writing-mode: vertical-rl;
    transform: rotate(180deg);
}

.sidebar-label {
    margin-top: 35px;
}

.sidebar-pin {
    width: 36px;
    height: 42px;
    margin-top: 40px;
}

.sidebar-version {
    margin-top: auto;
    color: #2a63ae;
}

.content {
    flex: 1;
    min-width: 0;
    display: flex;
    flex-direction: column;
    padding-left: 3px;
}

.doc-tabs {
    display: flex;
    align-items: flex-end;
    gap: 14px;
    height: 81px;
    padding-left: 17px;
    background: #e5e5e5;
    border-bottom: 9px solid #4874a8;
}

.doc-tab {
    display: flex;
    align-items: center;
    gap: 22px;
    height: 60px;
    padding: 2px 12px 0 26px;
    background: #fff;
    border: solid #c0c0c0;
    border-width: 2px 2px 0;
    color: #4a74ae;
}

.doc-tab button {
    color: #1f5aa5;
}

.doc-tab svg,
.light {
    width: 26px;
    height: 26px;
}

.doc-tab.active,
.doc-tab.active button {
    background: #4874a8;
    color: #fff;
}

.doc-tools {
    display: flex;
    gap: 19px;
    margin-left: auto;
    padding: 0 7px 11px 0;
}

.doc-tools svg {
    width: 36px;
    height: 36px;
}

.subtabs {
    display: flex;
    gap: 26px;
    margin: 0 7px 0 9px;
    padding: 8px 0 0 15px;
    border-bottom: 2px solid #c8c8c8;
}

.subtab {
    position: relative;
    height: 60px;
    padding: 0 21px 3px 25px;
    background: #fff;
    border: solid #c4c4c4;
    border-width: 2px 0 0 2px;
    color: #4a74ae;
}

/* slanted right edge */
.subtab::after {
    content: "";
    position: absolute;
    top: -2px;
    right: -10px;
    bottom: 0;
    width: 20px;
    background: inherit;
    border: solid #c4c4c4;
    border-width: 2px 2px 0 0;
    transform: skewX(18deg);
}

.subtab.active,
.subtab.active::after {
    background: #4874a8;
    border-color: #4874a8;
    color: #fff;
}

.panel {
    flex: 1;
    display: flex;
    flex-direction: column;
    gap: 9px;
    margin: 0 7px 0 9px;
    padding: 9px 9px 0 8px;
    background: #fff;
}

/* Grid */
.grid-box {
    flex: 1;
    display: flex;
    border: solid #b5b5b5;
    border-width: 3px 2px;
}

.grid {
    width: 100%;
    height: 100%;
    table-layout: fixed;
    border-collapse: separate;
    border-spacing: 0;
}

.c-action { width: 376px; }
.c-clients { width: 135px; }
.c-qte { width: 243px; }
.c-ca { width: 189px; }
.c-quantite { width: 162px; }
.c-panier { width: 217px; }
.c-nouveaux { width: 296px; }
.c-anciens { width: 257px; }
.c-docs { width: 243px; }
.c-articles { width: 338px; }
.c-parclient { width: 473px; }
.c-menu { width: 31px; }

.grid th {
    height: 64px;
    padding-top: 6px;
    background: #f0ebe4;
    border-right: 2px solid #b5b5b5;
    border-bottom: 3px solid #b5b5b5;
    box-shadow: inset 0 5px #e8e2d6;
    font-weight: normal;
    white-space: nowrap;
}

.grid th.sorted {
    position: relative;
}

.sort {
    position: absolute;
    top: 1px;
    left: 50%;
    width: 26px;
    height: 13px;
    margin-left: -13px;
}

.grid th.menu-cell {
    padding: 0;
    background: #4874a8;
    border-right: none;
    box-shadow: none;
}

.menu-cell button {
    display: block;
    margin: 0 auto;
}

.menu-cell svg {
    width: 8px;
    height: 36px;
}

.grid td {
    height: 49px;
    padding: 0 9px 0 10px;
    background: #f2f2f2;
    border-right: 2px solid #cecece;
    border-bottom: 2px solid #cecece;
    text-align: right;
    white-space: nowrap;
}

.grid td:first-child {
    text-align: left;
}

.grid .selected td {
    box-shadow: inset 0 5px #0078d7, inset 0 -5px #0078d7;
}

.grid .selected td:first-child {
    box-shadow: inset 0 5px #0078d7, inset 0 -5px #0078d7, inset 4px 0 #0078d7;
}

.grid .selected td:last-child {
    box-shadow: inset 0 5px #0078d7, inset 0 -5px #0078d7, inset -4px 0 #0078d7;
}

.grid .filler,
.grid .filler td {
    height: 100%;
    background: #fff;
    border: none;
}

.grid tfoot td {
    height: 58px;
    padding-top: 2px;
    background: #f0ebe4;
    border-top: 2px solid #b5b5b5;
    border-right-color: #b5b5b5;
    border-bottom: none;
}

.grid tfoot .corner {
    background: #fff;
    border: none;
}

/* Lower part: series pickers and chart */
.analysis {
    display: flex;
}

.analysis-form {
    width: 675px;
    padding: 11px 55px 0 27px;
    display: flex;
    flex-direction: column;
}

.analysis-form label {
    margin-bottom: 20px;
}

.select {
    position: relative;
    margin-bottom: 25px;
    border: 2px solid #cfcfcf;
}

.select.focus {
    border-color: #5b87c5;
}

.select select {
    width: 100%;
    height: 50px;
    padding: 0 7px 7px;
    appearance: none;
    outline: none;
}

.select .caret {
    position: absolute;
    top: 22px;
    right: 14px;
    pointer-events: none;
}

.chart {
    flex: 1;
    margin-bottom: 9px;
    border: solid #999;
    border-width: 3px 2px 0;
}

.chart svg {
    width: 100%;
    height: auto;
    font-family: "DejaVu Sans", sans-serif;
    font-size: 30px;
    fill: #404040;
}

.chart .chart-title {
    font-size: 38px;
    text-anchor: middle;
}

.chart .axis-title {
    font-size: 32px;
    text-anchor: middle;
}

.ticks-left {
    text-anchor: end;
}

.ticks-bottom {
    text-anchor: middle;
}

.lines {
    fill: none;
    stroke: #bdbdbd;
    stroke-width: 2;
}

.axes {
    fill: none;
    stroke: #9c9c9c;
    stroke-width: 2;
}

.curve {
    fill: none;
    stroke: #990000;
    stroke-width: 8;
}

.points circle,
.legend circle {
    fill: #fff;
    stroke: #e81515;
    stroke-width: 3;
}

.legend {
    font-family: "Liberation Sans", sans-serif;
    font-size: 30px;
}

.legend-line {
    stroke: #990000;
    stroke-width: 5;
}

.actions {
    display: flex;
    justify-content: center;
    height: 87px;
}

.back-btn {
    width: 540px;
    height: 82px;
    display: flex;
    align-items: center;
    padding-left: 66px;
    gap: 13px;
    background: #f1f1f1;
    border: 2px solid #bcbcbc;
    border-radius: 4px;
}

.back-btn svg {
    width: 54px;
    height: 34px;
}

/* Taskbar */
.taskbar {
    display: flex;
    height: 56px;
    background: linear-gradient(to right, #22353f, #22353f 40%, #1b2a41 90%);
    color: #fff;
    font-family: "Open Sans", sans-serif;
}

.start {
    width: 69px;
    display: flex;
    align-items: center;
    justify-content: center;
}

.start svg,
.search svg,
.tray svg {
    width: 24px;
    height: 24px;
}

.search {
    width: 514px;
    display: flex;
    align-items: center;
    gap: 18px;
    padding: 2px 17px 0;
    background: #f2f2f2;
    border-top: 2px solid #c0c0c0;
    color: #222;
}

.search input {
    flex: 1;
    min-width: 0;
    font-size: 22px;
    outline: none;
}

.search input::placeholder {
    color: #333;
}

.task-icons {
    display: flex;
    gap: 2px;
    padding-left: 2px;
}

.task-icons button {
    width: 73px;
    display: flex;
    align-items: center;
    justify-content: center;
}

.task-icons svg {
    width: 36px;
    height: 36px;
}

.task-icons .thin {
    width: 24px;
    height: 24px;
}

.task-icons .outlook {
    background: #a66a33;
}

.task-icons .current {
    background: #4a5d68;
}

.badge {
    font-size: 13px;
    font-weight: bold;
    text-anchor: middle;
    fill: #fff;
}

.tray {
    display: flex;
    align-items: center;
    gap: 12px;
    margin-left: auto;
    padding: 2px 32px 0 0;
    border-right: 2px solid #7a8492;
}

.clock {
    display: flex;
    flex-direction: column;
    align-items: center;
    margin: 0 18px 0 4px;
    font-size: 17px;
    line-height: 28px;
}
```
